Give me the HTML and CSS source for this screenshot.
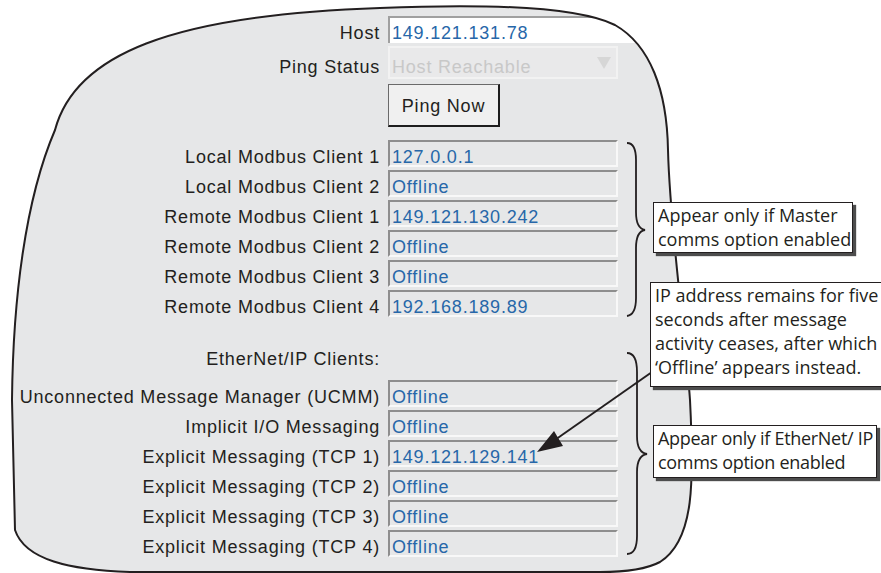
FILE: index.html
```html
<!DOCTYPE html>
<html lang="en">
<head>
  <meta charset="UTF-8">
  <meta name="viewport" content="width=device-width, initial-scale=1.0">
  <title>Network Clients</title>
  <link rel="stylesheet" href="styles.css">
</head>
<body>
  <div class="stage">
    <!-- screen outline, fill only -->
    <svg class="blob" width="881" height="573" viewBox="0 0 881 573">
      <path d="M130 572 C70 570 25 560 15 530 L12 400 C13 300 25 200 55 130 C75 55 170 15 380 8 C500 3 580 8 615 25 C650 45 667 90 668 150 C670 230 685 330 690 400 C694 480 695 540 660 562 C645 570 625 572 600 572 Z" fill="#e6e7e8"/>
    </svg>

    <div class="form">
      <div class="group top">
        <div class="row">
          <span class="label">Host</span>
          <span class="field host">149.121.131.78</span>
        </div>
        <div class="row tall">
          <span class="label">Ping Status</span>
          <span class="field status">Host Reachable<span class="caret"></span></span>
        </div>
        <div class="row action">
          <span class="label"></span>
          <button class="btn">Ping Now</button>
        </div>
      </div>

      <div class="group">
        <div class="row"><span class="label">Local Modbus Client 1</span><span class="field">127.0.0.1</span></div>
        <div class="row"><span class="label">Local Modbus Client 2</span><span class="field">Offline</span></div>
        <div class="row"><span class="label">Remote Modbus Client 1</span><span class="field">149.121.130.242</span></div>
        <div class="row"><span class="label">Remote Modbus Client 2</span><span class="field">Offline</span></div>
        <div class="row"><span class="label">Remote Modbus Client 3</span><span class="field">Offline</span></div>
        <div class="row"><span class="label">Remote Modbus Client 4</span><span class="field">192.168.189.89</span></div>
      </div>

      <div class="group">
        <div class="row heading"><span class="label">EtherNet/IP Clients:</span></div>
        <div class="row"><span class="label">Unconnected Message Manager (UCMM)</span><span class="field">Offline</span></div>
        <div class="row"><span class="label">Implicit I/O Messaging</span><span class="field">Offline</span></div>
        <div class="row"><span class="label">Explicit Messaging (TCP 1)</span><span class="field">149.121.129.141</span></div>
        <div class="row"><span class="label">Explicit Messaging (TCP 2)</span><span class="field">Offline</span></div>
        <div class="row"><span class="label">Explicit Messaging (TCP 3)</span><span class="field">Offline</span></div>
        <div class="row"><span class="label">Explicit Messaging (TCP 4)</span><span class="field">Offline</span></div>
      </div>
    </div>

    <!-- outline stroke, braces and pointer drawn over the form -->
    <svg class="overlay" width="881" height="573" viewBox="0 0 881 573">
      <path d="M130 572 C70 570 25 560 15 530 L12 400 C13 300 25 200 55 130 C75 55 170 15 380 8 C500 3 580 8 615 25 C650 45 667 90 668 150 C670 230 685 330 690 400 C694 480 695 540 660 562 C645 570 625 572 600 572 Z" fill="none" stroke="#231f20" stroke-width="2"/>
      <path d="M627 143 C634 143 636 150 636 160 L636 212 C636 223 639 229 645 230 C639 231 636 237 636 248 L636 298 C636 308 634 315 627 316" fill="none" stroke="#231f20" stroke-width="1.8"/>
      <path d="M627 353 C634 353 637 360 637 372 L637 436 C637 447 640 453 647 454 C640 455 637 461 637 472 L637 536 C637 548 634 554 627 554" fill="none" stroke="#231f20" stroke-width="1.8"/>
      <line x1="652" y1="372" x2="552" y2="442" stroke="#231f20" stroke-width="2"/>
      <polygon points="537,452 554,431 563,446" fill="#231f20"/>
    </svg>

    <div class="note note-master">Appear only if Master<br>comms option enabled</div>
    <div class="note note-timeout">IP address remains for five<br>seconds after message<br>activity ceases, after which<br>‘Offline’ appears instead.</div>
    <div class="note note-ethernet">Appear only if EtherNet/ IP<br>comms option enabled</div>
  </div>
</body>
</html>
```

FILE: styles.css
```css
body {
  margin: 0;
  background-color: #fff;
  font-family: 'Liberation Sans', Arial, sans-serif;
  color: #231f20;
}

.stage {
  position: relative;
  width: 881px;
  height: 573px;
  overflow: hidden;
}

.blob,
.overlay {
  position: absolute;
  top: 0;
  left: 0;
}

.overlay {
  z-index: 2;
  pointer-events: none;
}

/* form sits inside the screen outline */
.form {
  position: relative;
  z-index: 1;
  display: flex;
  flex-direction: column;
  gap: 13px;
  padding-top: 16px;
  font-size: 18px;
  letter-spacing: 0.8px;
  clip-path: path("M130 572 C70 570 25 560 15 530 L12 400 C13 300 25 200 55 130 C75 55 170 15 380 8 C500 3 580 8 615 25 C650 45 667 90 668 150 C670 230 685 330 690 400 C694 480 695 540 660 562 C645 570 625 572 600 572 Z");
}

.group {
  display: flex;
  flex-direction: column;
  gap: 3px;
}

.group.top + .group + .group {
  margin-top: 12px;
}

.row {
  display: flex;
  gap: 8px;
  height: 27px;
}

.label {
  width: 380px;
  flex-shrink: 0;
  box-sizing: border-box;
  padding-top: 7px;
  line-height: 20px;
  text-align: right;
  white-space: nowrap;
}

.field {
  width: 230px;
  height: 27px;
  box-sizing: border-box;
  padding: 5px 2px 0;
  line-height: 20px;
  color: #2767a9;
  white-space: nowrap;
  border-top: 2px solid #8e8e8e;
  border-left: 2px solid #8e8e8e;
  border-right: 2px solid #f8f8f8;
  border-bottom: 2px solid #f8f8f8;
}

.field.host {
  width: 260px;
  background-color: #fff;
  border-top-color: #a0a0a0;
  border-left-color: #a0a0a0;
  border-right: none;
  border-bottom: none;
}

.row.tall {
  height: 33px;
}

.row.tall .label {
  padding-top: 11px;
}

.field.status {
  height: 33px;
  display: flex;
  justify-content: space-between;
  padding: 9px 5px 0 2px;
  color: #c8c8c8;
  background-color: #e9e9ea;
  border: 2px solid #f2f2f2;
}

.caret {
  width: 0;
  height: 0;
  border-left: 7px solid transparent;
  border-right: 7px solid transparent;
  border-top: 12px solid #d6d6d6;
}

.row.action {
  height: 45px;
  padding-top: 2px;
  box-sizing: border-box;
}

.btn {
  width: 112px;
  height: 43px;
  padding: 3px 0 0;
  font-family: inherit;
  font-size: 18px;
  letter-spacing: 0.8px;
  color: #231f20;
  background-color: #f0f0f0;
  border-top: 1px solid #6a6a6a;
  border-left: 1px solid #6a6a6a;
  border-right: 2px solid #1e1e1e;
  border-bottom: 2px solid #1e1e1e;
}

.row.heading {
  margin-bottom: 8px;
}

/* callout notes */
.note {
  position: absolute;
  z-index: 3;
  box-sizing: border-box;
  padding: 0 4px;
  font-family: 'Open Sans', 'Noto Sans', sans-serif;
  font-size: 18px;
  line-height: 24px;
  color: #231f20;
  white-space: nowrap;
  background-color: #fff;
  border: 1.5px solid #231f20;
  box-shadow: 3px 3px 1px #4d4d4d;
}

.note-master {
  left: 653px;
  top: 202px;
  width: 200px;
  height: 51px;
}

.note-timeout {
  left: 650px;
  top: 282px;
  width: 240px;
  height: 105px;
  padding-left: 4px;
}

.note-ethernet {
  left: 653px;
  top: 425px;
  width: 224px;
  height: 53px;
  letter-spacing: -0.3px;
}
```
